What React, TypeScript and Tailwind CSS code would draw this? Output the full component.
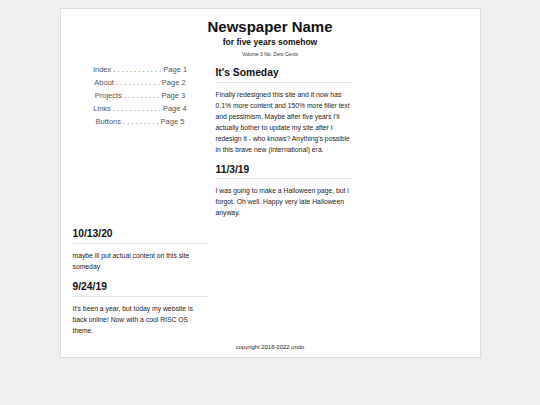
// Newspaper-style home page: header, contents list, two columns of posts

const navItems = [
  { label: 'Index', dots: 12, page: 1 },
  { label: 'About', dots: 11, page: 2 },
  { label: 'Projects', dots: 9, page: 3 },
  { label: 'Links', dots: 12, page: 4 },
  { label: 'Buttons', dots: 9, page: 5 },
];

type PostProps = { title: string; children: React.ReactNode; className?: string };

const Post = ({ title, children, className = '' }: PostProps) => (
  <article className={className}>
    <h2 className="text-[10.3px] font-bold leading-[13px] text-[#111]">{title}</h2>
    <hr className="mt-[2.5px] border-0 border-t border-[#e4e4e4]" />
    <p className="mt-[6px] text-[6.8px] leading-[11px] text-[#222]">{children}</p>
  </article>
);

export default function App() {
  return (
    <div className="min-h-screen bg-[#efefef] pt-2 font-['Liberation_Sans',Arial,sans-serif]">
      <div className="mx-auto flex h-[350px] w-[421px] flex-col border border-[#dcdcdc] bg-white px-3 pt-[9px]">
        <header className="text-center text-[#111]">
          <h1 className="text-[15px] font-bold leading-[17px]">Newspaper Name</h1>
          <p className="mt-[2px] text-[8.5px] font-bold leading-[11px]">for five years somehow</p>
          <p className="mt-[1.5px] text-[5px] leading-[8px] text-[#333]">Volume 3 No. Zero Cents</p>
        </header>

        <div className="mt-[5.5px] grid grid-cols-[135px_136px] gap-x-2">
          <nav className="flex flex-col items-center text-[7.5px] leading-[13px] text-[#555]">
            {navItems.map(item => (
              <span key={item.label} className="whitespace-pre">
                {item.label + ' ' + '. '.repeat(item.dots) + 'Page ' + item.page}
              </span>
            ))}
          </nav>

          <div className="pt-[3px]">
            <Post title="It's Someday">
              Finally redesigned this site and it now has 0.1% more content and 150% more filler text
              and pessimism. Maybe after five years I'll actually bother to update my site after I
              redesign it - who knows? Anything's possible in this brave new (international) era.
            </Post>
            <Post title="11/3/19" className="mt-2">
              I was going to make a Halloween page, but i forgot. Oh well. Happy very late Halloween
              anyway.
            </Post>
          </div>

          <div className="mt-[9px]">
            <Post title="10/13/20">maybe ill put actual content on this site someday</Post>
            <Post title="9/24/19" className="mt-[8.5px]">
              It's been a year, but today my website is back online! Now with a cool RISC OS theme.
            </Post>
          </div>
        </div>

        <footer className="mt-[7px] text-center text-[5.9px] leading-[8px] text-[#222]">
          copyright 2016-2022 undo
        </footer>
      </div>
    </div>
  );
}
